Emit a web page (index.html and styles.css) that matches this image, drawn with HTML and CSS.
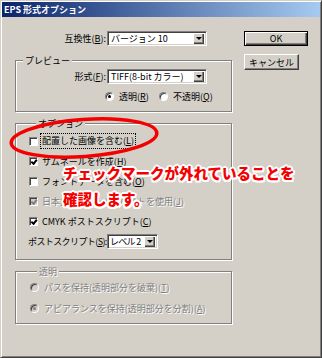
FILE: index.html
```html
<!DOCTYPE html>
<html lang="ja">
  <head>
    <meta charset="UTF-8" />
    <title>EPS 形式オプション</title>
    <link rel="stylesheet" href="styles.css">
  </head>
  <body>
    <div class="window">
      <div class="titlebar">EPS 形式オプション</div>
      <div class="dialog">
        <div class="main">
          <div class="field-row">
            <span class="lbl">互換性(<u>B</u>):</span>
            <div class="select sel-ver"><span>バージョン 10</span><i class="drop"></i></div>
          </div>

          <fieldset class="group group-preview">
            <legend>プレビュー</legend>
            <div class="field-row">
              <span class="lbl lbl-in">形式(<u>F</u>):</span>
              <div class="select sel-ver"><span>TIFF(8-bit カラー)</span><i class="drop"></i></div>
            </div>
            <div class="radios">
              <span class="radio radio-first"><i class="dot on"></i>透明(<u>R</u>)</span>
              <span class="radio"><i class="dot"></i>不透明(<u>Q</u>)</span>
            </div>
          </fieldset>

          <fieldset class="group group-options">
            <legend>オプション</legend>
            <div class="opt"><i class="check"></i><span class="focus">配置した画像を含む(<u>L</u>)</span></div>
            <div class="opt"><i class="check on"></i>サムネールを作成(<u>H</u>)</div>
            <div class="opt"><i class="check"></i>フォントデータを含む(<u>O</u>)</div>
            <div class="opt disabled"><i class="check on"></i>日本語フォントに2バイトを使用(<u>J</u>)</div>
            <div class="opt"><i class="check on"></i>CMYK ポストスクリプト(<u>C</u>)</div>
            <div class="opt opt-level">
              <span class="lbl-level">ポストスクリプト(<u>S</u>):</span>
              <div class="select sel-level"><span>レベル 2</span><i class="drop"></i></div>
            </div>
          </fieldset>

          <fieldset class="group group-trans disabled">
            <legend>透明</legend>
            <div class="trow"><i class="dot"></i>パスを保持(透明部分を破棄)(<u>T</u>)</div>
            <div class="trow"><i class="dot on"></i>アピアランスを保持(透明部分を分割)(<u>A</u>)</div>
          </fieldset>
        </div>

        <div class="side">
          <button class="btn btn-ok">OK</button>
          <button class="btn btn-cancel">キャンセル</button>
        </div>
      </div>

      <!-- annotation drawn on top of the screenshot -->
      <svg class="ring" width="322" height="358" viewBox="0 0 322 358">
        <ellipse cx="83" cy="137" rx="73" ry="18.5" transform="rotate(-4 83 137)" fill="none" stroke="#f50000" stroke-width="3.5" />
      </svg>
      <div class="note">チェックマークが外れていることを<br>確認します。</div>
    </div>
  </body>
</html>
```

FILE: styles.css
```css
html {
  font-family: "Noto Sans CJK JP", "Liberation Sans", sans-serif;
  font-size: 9px;
  color: #000;
  line-height: 11px;
}
body {
  margin: 0;
  background: #d4d0c8;
}
u {
  text-decoration-thickness: 1px;
  text-underline-offset: 1px;
}
.window {
  position: relative;
  box-sizing: border-box;
  width: 322px;
  height: 358px;
  padding: 1px;
  border: 1px solid;
  border-color: #d4d0c8 #404040 #404040 #d4d0c8;
  box-shadow: inset 1px 1px #fff, inset -1px -1px #808080;
  background: #d4d0c8;
  overflow: hidden;
}
.titlebar {
  height: 15px;
  line-height: 15px;
  padding-left: 2px;
  background: linear-gradient(to right, #0a246a, #a6caf0);
  color: #fff;
  font-weight: bold;
  white-space: nowrap;
}
.dialog {
  display: flex;
  padding: 14px 0 0 13px;
}
.main {
  width: 217px;
}

/* label + combo rows */
.field-row {
  display: flex;
  align-items: center;
  height: 15px;
}
.lbl {
  width: 91px;
  margin-right: 1px;
  text-align: right;
  white-space: nowrap;
}
.lbl-in {
  width: 90px;
}
.select {
  box-sizing: border-box;
  display: flex;
  align-items: center;
  height: 15px;
  padding: 2px;
  background: #fff;
  border: 1px solid;
  border-color: #808080 #fff #fff #808080;
  box-shadow: inset 1px 1px #404040, inset -1px -1px #d4d0c8;
}
.select span {
  flex: 1;
  padding-left: 1px;
  white-space: nowrap;
  overflow: hidden;
}
.sel-ver {
  width: 100px;
}
.sel-level {
  flex: none;
  width: 51px;
}
.sel-level span {
  padding-left: 0;
  letter-spacing: -0.7px;
}
.drop {
  box-sizing: border-box;
  flex: none;
  display: flex;
  align-items: center;
  justify-content: center;
  width: 11px;
  height: 11px;
  background: #d4d0c8;
  box-shadow: inset 1px 1px #fff, inset -1px -1px #404040, inset -2px -2px #808080;
}
.drop::after {
  content: "";
  border-left: 3px solid transparent;
  border-right: 3px solid transparent;
  border-top: 3px solid #000;
}

/* group boxes */
.group {
  margin: 9px 0 0;
  padding: 0;
  min-width: 0;
  border: 1px solid #808080;
  box-shadow: inset 1px 1px #fff, 1px 1px #fff;
}
.group legend {
  margin-left: 7px;
  padding: 0 2px;
  line-height: 11px;
  background: #d4d0c8;
}
.group-preview {
  padding-bottom: 9px;
}
.group-preview .field-row {
  margin-top: 3px;
}
.radios {
  display: flex;
  margin: 7px 0 0 89px;
}
.radio {
  display: flex;
  align-items: center;
}
.radio-first {
  width: 54px;
}
.dot {
  position: relative;
  box-sizing: border-box;
  width: 9px;
  height: 9px;
  margin-right: 5px;
  border-radius: 50%;
  background: #fff;
  border: 1px solid;
  border-color: #808080 #fff #fff #808080;
  box-shadow: inset 1px 1px #404040;
}
.dot.on::after {
  content: "";
  position: absolute;
  left: 2px;
  top: 2px;
  width: 3px;
  height: 3px;
  border-radius: 50%;
  background: #000;
}

.group-options {
  margin-top: 6px;
  padding: 2px 0 8px 13px;
}
.opt {
  display: flex;
  align-items: center;
  height: 20px;
  white-space: nowrap;
}
.check {
  position: relative;
  box-sizing: border-box;
  flex: none;
  width: 9px;
  height: 9px;
  margin-right: 4px;
  background: #fff;
  border: 1px solid;
  border-color: #808080 #fff #fff #808080;
  box-shadow: inset 1px 1px #404040;
}
.check.on::after {
  content: "";
  position: absolute;
  left: 1px;
  top: 0;
  width: 4px;
  height: 2px;
  border-left: 2px solid #000;
  border-bottom: 2px solid #000;
  transform: rotate(-50deg) translate(-1px, 1px);
}
.focus {
  margin-left: -1px;
  padding: 1px 1px 2px;
  outline: 1px dotted #000;
  outline-offset: 0;
}
.opt-level {
  margin-left: -1px;
}
.lbl-level {
  width: 79px;
  white-space: nowrap;
  letter-spacing: -0.6px;
}

.group-trans {
  margin-top: 6px;
  padding: 0 0 4px 14px;
}
.trow {
  display: flex;
  align-items: center;
  height: 20px;
  margin-bottom: 1px;
  white-space: nowrap;
}
.disabled {
  color: #808080;
}
.disabled .trow,
.opt.disabled {
  text-shadow: 1px 1px #fff;
}
.disabled .dot,
.disabled .check {
  background: #d4d0c8;
}
.disabled .dot.on::after {
  background: #808080;
}
.opt.disabled .check.on::after {
  border-color: #808080;
}
.group-trans legend {
  text-shadow: 1px 1px #fff;
}

/* buttons */
.side {
  display: flex;
  flex-direction: column;
  align-items: flex-start;
  gap: 8px;
  margin-left: 12px;
}
.btn {
  box-sizing: border-box;
  height: 15px;
  padding: 0;
  font: inherit;
  color: #000;
  background: #d4d0c8;
  border: 1px solid;
  border-color: #fff #404040 #404040 #fff;
  box-shadow: inset -1px -1px #808080;
}
.btn-ok {
  width: 64px;
  border: 1px solid #000;
  box-shadow: inset 1px 1px #fff, inset -1px -1px #404040, inset -2px -2px #808080;
}
.btn-cancel {
  width: 55px;
  height: 16px;
}

/* red annotation */
.ring {
  position: absolute;
  left: 0;
  top: 0;
  pointer-events: none;
}
.note {
  position: absolute;
  left: 62px;
  top: 159px;
  font-size: 14.5px;
  font-weight: 900;
  line-height: 26px;
  color: #f50000;
  white-space: nowrap;
  text-shadow: -2px 0 #fff, 2px 0 #fff, 0 -2px #fff, 0 2px #fff,
    -1.5px -1.5px #fff, 1.5px -1.5px #fff, -1.5px 1.5px #fff, 1.5px 1.5px #fff;
}
```
